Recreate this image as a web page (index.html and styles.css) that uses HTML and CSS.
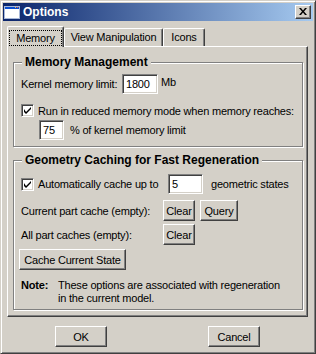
FILE: index.html
```html
<!DOCTYPE html>
<html>
	<head>
		<title>Options</title>
		<link rel="stylesheet" href="styles.css">
	</head>
	<body>
		<div class="window">
			<div class="titlebar">
				<svg class="app-icon" width="16" height="13" viewBox="0 0 16 13">
					<rect x="0" y="0" width="16" height="13" fill="#ffffff"/>
					<rect x="0" y="0" width="16" height="3" fill="#0a4ed0"/>
					<rect x="11" y="1" width="1" height="1" fill="#f0b040"/>
					<rect x="13" y="1" width="1" height="1" fill="#e05030"/>
					<rect x="0.5" y="0.5" width="15" height="12" fill="none" stroke="#a8b8d8"/>
				</svg>
				<span class="title">Options</span>
				<div class="close-btn">
					<svg width="8" height="7" viewBox="0 0 8 7">
						<path d="M0 0h2l2 2.5 2-2.5h2l-3 3.5 3 3.5h-2l-2-2.5-2 2.5h-2l3-3.5z" fill="#000"/>
					</svg>
				</div>
			</div>

			<div class="tabs">
				<div class="tab active"><span class="focus">Memory</span></div>
				<div class="tab tab-view">View Manipulation</div>
				<div class="tab tab-icons">Icons</div>
			</div>

			<div class="panel">
				<div class="group group-memory">
					<div class="group-title">Memory Management</div>
					<div class="row row-kernel">
						<span class="label kernel-label">Kernel memory limit:</span>
						<span class="field kernel-field">1800</span>
						<span class="unit">Mb</span>
					</div>
					<div class="row row-check">
						<span class="check"><svg width="7" height="7" viewBox="0 0 7 7"><path d="M0 2v3l2 2 5-5v-2l-5 5z" fill="#000"/></svg></span>
						<span>Run in reduced memory mode when memory reaches:</span>
					</div>
					<div class="row row-percent">
						<span class="field percent-field">75</span>
						<span class="percent-label">% of kernel memory limit</span>
					</div>
				</div>

				<div class="group group-cache">
					<div class="group-title">Geometry Caching for Fast Regeneration</div>
					<div class="row row-auto">
						<span class="check"><svg width="7" height="7" viewBox="0 0 7 7"><path d="M0 2v3l2 2 5-5v-2l-5 5z" fill="#000"/></svg></span>
						<span class="label auto-label">Automatically cache up to</span>
						<span class="field states-field">5</span>
						<span class="states-label">geometric states</span>
					</div>
					<div class="row row-current">
						<span class="label cache-label">Current part cache (empty):</span>
						<span class="btn btn-clear">Clear</span>
						<span class="btn btn-query">Query</span>
					</div>
					<div class="row row-all">
						<span class="label cache-label">All part caches (empty):</span>
						<span class="btn btn-clear">Clear</span>
					</div>
					<div class="row row-state">
						<span class="btn btn-state">Cache Current State</span>
					</div>
					<div class="note">
						<span class="note-head">Note:</span>
						<span class="note-text">These options are associated with regeneration in the current model.</span>
					</div>
				</div>
			</div>

			<div class="actions">
				<span class="btn btn-dialog">OK</span>
				<span class="btn btn-dialog">Cancel</span>
			</div>
		</div>
	</body>
</html>
```

FILE: styles.css
```css
body {
	margin: 0;
	font-family: "Liberation Sans", Arial, sans-serif;
	font-size: 11px;
	letter-spacing: -0.2px;
	color: #000;
}
.window {
	width: 316px;
	height: 354px;
	box-sizing: border-box;
	background-color: #D4D0C8;
	border: 1px solid;
	border-color: #D4D0C8 #404040 #404040 #D4D0C8;
	box-shadow: inset 1px 1px 0 #fff, inset -1px -1px 0 #808080;
	padding: 2px;
}
.titlebar {
	height: 18px;
	display: flex;
	align-items: center;
	background: linear-gradient(to right, #0A246A, #A6CAF0);
	color: white;
	padding: 0 2px 0 1px;
}
.app-icon {
	display: block;
	margin-top: 1px;
}
.title {
	font-weight: bold;
	font-size: 12px;
	letter-spacing: 0;
	margin-left: 3px;
	flex: 1;
}
.close-btn {
	width: 16px;
	height: 14px;
	box-sizing: border-box;
	background-color: #D4D0C8;
	border: 1px solid;
	border-color: #fff #404040 #404040 #fff;
	box-shadow: inset -1px -1px 0 #808080;
	display: flex;
	align-items: center;
	justify-content: center;
	padding: 0 1px 1px 0;
}
.close-btn svg {
	display: block;
}

/* tabs */
.tabs {
	display: flex;
	align-items: flex-end;
	height: 20px;
	margin-top: 5px;
	padding-left: 4px;
}
.tab {
	height: 18px;
	box-sizing: border-box;
	border: 1px solid;
	border-bottom: none;
	border-color: #fff #404040 #fff #fff;
	box-shadow: inset -1px 0 0 #808080;
	border-radius: 2px 2px 0 0;
	text-align: center;
	line-height: 16px;
	white-space: nowrap;
}
.tab.active {
	height: 21px;
	width: 57px;
	margin-bottom: -1px;
	position: relative;
	z-index: 1;
	background-color: #D4D0C8;
	padding-top: 3px;
}
.tab-view {
	width: 99px;
}
.tab-icons {
	width: 42px;
}
.focus {
	display: inline-block;
	outline: 1px dotted #000;
	width: 51px;
	line-height: 14px;
}

/* panel */
.panel {
	width: 301px;
	height: 271px;
	box-sizing: border-box;
	margin-left: 4px;
	border: 1px solid;
	border-color: #fff #404040 #404040 #fff;
	box-shadow: inset -1px -1px 0 #808080;
	padding-top: 15px;
}
.group {
	width: 290px;
	box-sizing: border-box;
	margin-left: 5px;
	border: 1px solid #808080;
	box-shadow: inset 1px 1px 0 #fff, 1px 1px 0 #fff;
	padding: 0 7px;
}
.group-memory {
	height: 85px;
}
.group-cache {
	height: 150px;
	margin-top: 13px;
}
.group-title {
	width: fit-content;
	margin: -7px 0 0 1px;
	padding: 0 3px;
	height: 13px;
	line-height: 13px;
	font-weight: bold;
	font-size: 12px;
	letter-spacing: 0;
	background-color: #D4D0C8;
}
.row {
	display: flex;
	align-items: center;
	white-space: nowrap;
}
.field {
	height: 20px;
	box-sizing: border-box;
	background-color: #fff;
	border: 1px solid;
	border-color: #808080 #fff #fff #808080;
	box-shadow: inset 1px 1px 0 #404040, inset -1px -1px 0 #D4D0C8;
	padding-left: 3px;
	line-height: 18px;
}
.check {
	width: 13px;
	height: 13px;
	box-sizing: border-box;
	background-color: #fff;
	border: 1px solid;
	border-color: #808080 #fff #fff #808080;
	box-shadow: inset 1px 1px 0 #404040, inset -1px -1px 0 #D4D0C8;
	display: flex;
	align-items: center;
	justify-content: center;
	margin-right: 4px;
	flex-shrink: 0;
}
.check svg {
	display: block;
}
.btn {
	display: inline-flex;
	align-items: center;
	justify-content: center;
	height: 21px;
	box-sizing: border-box;
	background-color: #D4D0C8;
	border: 1px solid;
	border-color: #fff #404040 #404040 #fff;
	box-shadow: inset -1px -1px 0 #808080;
	white-space: nowrap;
}

/* memory group */
.row-kernel {
	margin-top: 5px;
	height: 20px;
}
.kernel-label {
	width: 101px;
}
.kernel-field {
	width: 36px;
}
.unit {
	align-self: flex-start;
	margin: 2px 0 0 3px;
}
.row-check {
	margin-top: 10px;
	height: 13px;
}
.row-percent {
	margin-top: 3px;
	height: 20px;
	padding-left: 18px;
}
.percent-field {
	width: 25px;
}
.percent-label {
	margin-left: 6px;
}

/* cache group */
.row-auto {
	margin-top: 7px;
	height: 20px;
}
.auto-label {
	width: 130px;
}
.states-field {
	width: 35px;
}
.states-label {
	margin-left: 8px;
}
.row-current {
	margin-top: 6px;
	height: 21px;
}
.row-all {
	margin-top: 3px;
	height: 21px;
}
.row-state {
	margin-top: 4px;
	height: 21px;
}
.cache-label {
	width: 142px;
}
.btn-clear {
	width: 32px;
}
.btn-query {
	width: 38px;
	margin-left: 5px;
}
.btn-state {
	width: 107px;
	margin-left: -2px;
}
.note {
	display: flex;
	margin-top: 9px;
	line-height: 13px;
}
.note-head {
	font-weight: bold;
	width: 37px;
	flex-shrink: 0;
}
.note-text {
	width: 226px;
}

/* dialog buttons */
.actions {
	display: flex;
	margin-top: 9px;
	padding-left: 52px;
	gap: 101px;
}
.btn-dialog {
	width: 52px;
}
```
